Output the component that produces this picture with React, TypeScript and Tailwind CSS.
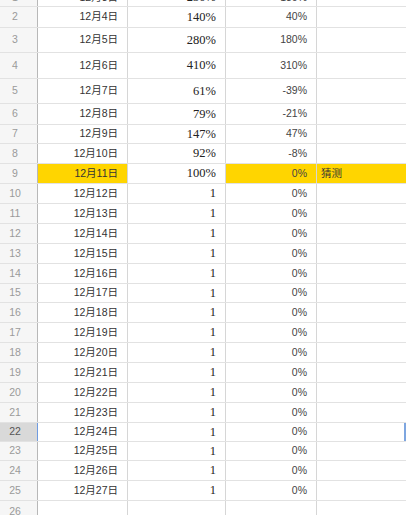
type Row = { n: number; h: number; date: string; b: string; c: string; d?: string; hl?: boolean; active?: boolean };

const heights: Record<number, number> = {
  2: 21, 3: 25, 4: 26, 5: 25, 6: 21, 7: 19, 15: 19, 22: 19, 23: 19,
};

const early: [string, string, string][] = [
  ["12月3日", "230%", "130%"],
  ["12月4日", "140%", "40%"],
  ["12月5日", "280%", "180%"],
  ["12月6日", "410%", "310%"],
  ["12月7日", "61%", "-39%"],
  ["12月8日", "79%", "-21%"],
  ["12月9日", "147%", "47%"],
  ["12月10日", "92%", "-8%"],
  ["12月11日", "100%", "0%"],
];

const rows: Row[] = [];
for (let n = 1; n <= 25; n++) {
  const [date, b, c] = n <= 9 ? early[n - 1] : [`12月${n + 2}日`, "1", "0%"];
  rows.push({
    n,
    h: heights[n] ?? 20,
    date,
    b,
    c,
    d: n === 9 ? "猜测" : undefined,
    hl: n === 9,
    active: n === 22,
  });
}

const font = { fontFamily: '"Liberation Sans", "Noto Sans CJK SC", sans-serif' };

function SheetRow({ r }: { r: Row }) {
  return (
    <div
      className={`flex border-b border-[#e2e2e2] ${r.n === 1 ? "-mt-[11px]" : ""}`}
      style={{ height: r.n === 1 ? 18 : r.h }}
    >
      <div
        className={`w-[38px] shrink-0 flex items-center justify-center pr-[7px] text-[10.5px] border-r ${
          r.active ? "bg-[#d9d9d9] text-[#555] border-r-[#6f9be0]" : "bg-[#f6f6f6] text-[#9a9a9a] border-r-[#b8b8b8]"
        }`}
      >
        {r.n}
      </div>
      <div
        className={`w-[90px] shrink-0 flex items-center justify-end pr-[9px] text-[10.5px] text-[#333] border-r border-r-[#d6d6d6] ${
          r.hl ? "bg-[#ffd500]" : ""
        }`}
      >
        {r.date}
      </div>
      <div className="w-[98px] shrink-0 flex items-center justify-end pr-[9px] text-[12.5px] text-[#222] border-r border-r-[#d6d6d6] font-['Liberation_Serif',serif]">
        {r.b}
      </div>
      <div
        className={`w-[91px] shrink-0 flex items-center justify-end pr-[9px] text-[10.5px] text-[#444] border-r border-r-[#d6d6d6] ${
          r.hl ? "bg-[#ffd500]" : ""
        }`}
      >
        {r.c}
      </div>
      <div
        className={`flex-1 flex items-center pl-[4px] text-[10.5px] text-[#333] ${r.hl ? "bg-[#ffd500]" : ""} ${
          r.active ? "border-r-2 border-r-[#7ea6e0]" : ""
        }`}
      >
        {r.d}
      </div>
    </div>
  );
}

export default function App() {
  return (
    <div className="w-[406px] h-[515px] overflow-hidden bg-white" style={font}>
      {rows.map((r) => (
        <SheetRow key={r.n} r={r} />
      ))}
      <div className="flex h-[40px]">
        <div className="w-[38px] shrink-0 flex items-start justify-center pt-[3px] pr-[7px] text-[10.5px] bg-[#f6f6f6] text-[#9a9a9a] border-r border-r-[#b8b8b8]">
          26
        </div>
        <div className="w-[90px] shrink-0 border-r border-r-[#d6d6d6]" />
        <div className="w-[98px] shrink-0 border-r border-r-[#d6d6d6]" />
        <div className="w-[91px] shrink-0 border-r border-r-[#d6d6d6]" />
        <div className="flex-1" />
      </div>
    </div>
  );
}
